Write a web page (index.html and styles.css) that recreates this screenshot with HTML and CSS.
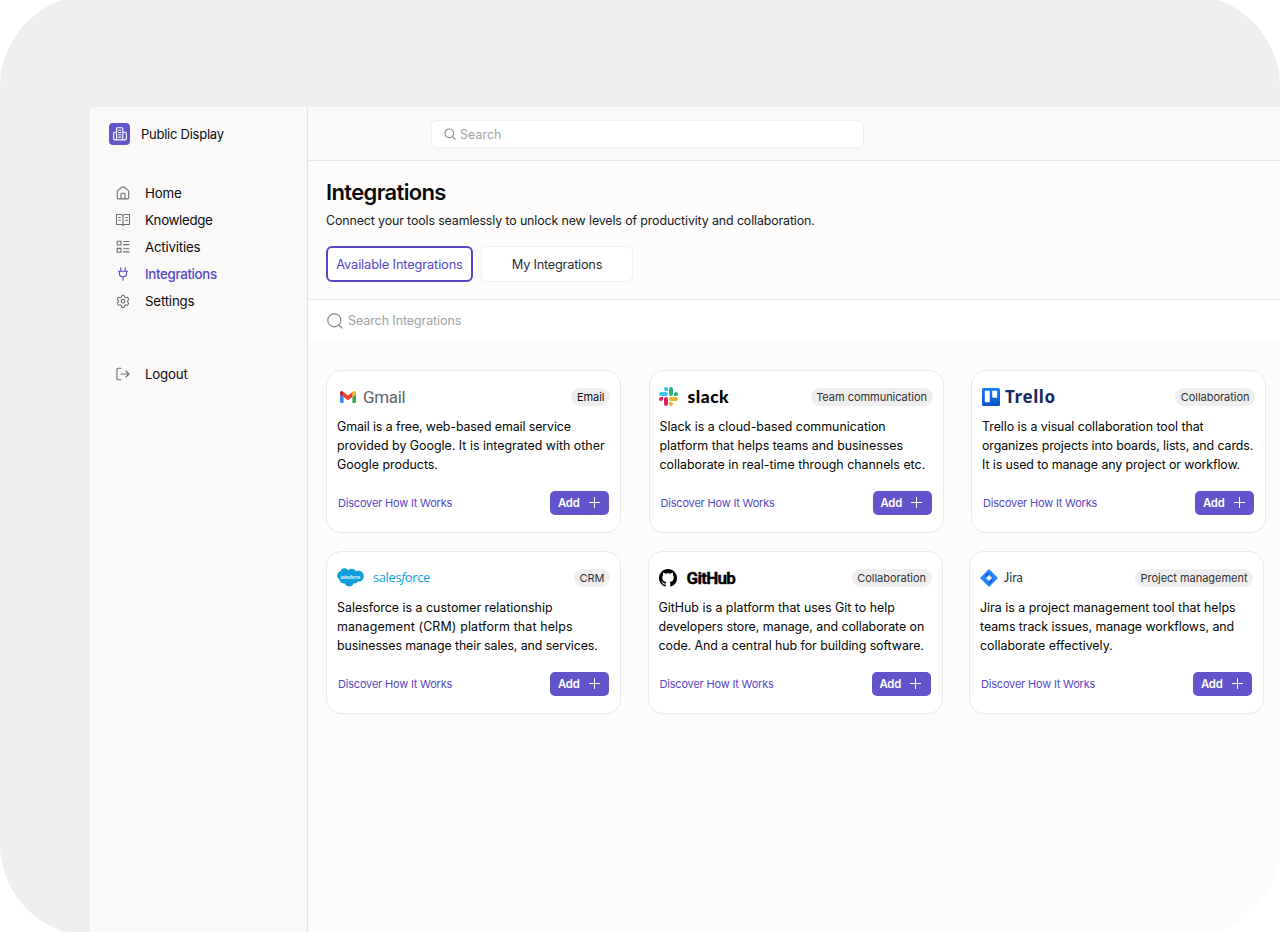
FILE: index.html
```html
<!DOCTYPE html>
<html lang="en">
<head>
<meta charset="utf-8">
<title>Integrations</title>
<link rel="stylesheet" href="styles.css">
</head>
<body>
<div class="shell">
<div class="app">
  <aside class="sidebar">
    <div class="org">
      <span class="org-logo"><svg width="16" height="16" viewBox="0 0 16 16" fill="none" stroke="#fff" stroke-width="1.1" stroke-linejoin="round" stroke-linecap="round"><path d="M4.600 13.800V2.600Q4.600 1.700 5.500 1.700H9.900Q10.800 1.700 10.800 2.600V13.800M4.600 6.300H2.500Q1.700 6.300 1.700 7.100V13.100Q1.700 13.900 2.500 13.900H13.500Q14.300 13.900 14.300 13.100V7.100Q14.300 6.300 13.500 6.300H10.800M6.600 4.200H8.900M6.600 6.500H8.900M6.600 8.800H8.900M6.600 11.100H8.900"/></svg></span>
      <span class="org-name">Public Display</span>
    </div>
    <nav class="nav">
      <a class="nav-item"><svg class="ni" viewBox="0 0 14 14"><path d="M1.3 5.6Q1.3 4.9 1.9 4.4L6.2 1Q7 .5 7.8 1L12.1 4.4Q12.7 4.9 12.7 5.6V11.7Q12.7 12.9 11.5 12.9H2.5Q1.3 12.9 1.3 11.7ZM5 12.8V8.3Q5 7.2 6 7.2H8Q9 7.2 9 8.3V12.8"/></svg><span>Home</span></a>
      <a class="nav-item"><svg class="ni" viewBox="0 0 14 14"><path d="M7 2.5Q6.2 1.5 4.8 1.5H.5V11.5H5Q6.3 11.5 7 12.5Q7.7 11.5 9 11.5H13.5V1.5H9.2Q7.8 1.5 7 2.5ZM7 2.5V12.5M2.6 4.5H4.4M2.6 7.3H4.4M9.6 4.5H11.4M9.6 7.3H11.4"/></svg><span class="tight">Knowledge</span></a>
      <a class="nav-item"><svg class="ni" viewBox="0 0 14 14"><path d="M1.2 1.2H5V5H1.2ZM1.2 8.4H5V12.3H1.2ZM7.6 1.5H13M7.6 4.6H13M7.6 8.8H13M7.6 11.9H13"/></svg><span>Activities</span></a>
      <a class="nav-item active"><svg class="ni" viewBox="0 0 14 14"><path d="M4.8 .8V4M9.2 .8V4M2.5 4.2H11.5M3.4 4.2V6.6Q3.4 9.9 7 9.9Q10.6 9.9 10.6 6.6V4.2M7 9.9V13.3"/></svg><span class="tight">Integrations</span></a>
      <a class="nav-item"><svg class="ni" viewBox="0 0 24 24"><g stroke-width="1.9"><path d="M9.6 3.9c.2-1.1.8-1.9 1.9-1.9h1c1.100 0 1.700.8 1.900 1.900l.2 1c.1.500.5.800.9 1l.500.300c.4.200.9.300 1.300.100l.9-.3c1-.4 2 0 2.500.9l.6 1.100c.5.900.3 2-.5 2.600l-.8.700c-.4.300-.5.700-.5 1.200s.1.900.5 1.200l.8.700c.8.600 1 1.700.5 2.600l-.6 1.100c-.5.900-1.500 1.300-2.500.9l-.9-.3c-.4-.2-.9-.1-1.300.1l-.5.300c-.4.200-.8.500-.9 1l-.2 1c-.2 1.100-.8 1.900-1.900 1.900h-1c-1.100 0-1.700-.8-1.900-1.900l-.2-1c-.1-.5-.5-.8-.9-1l-.5-.3c-.4-.2-.9-.3-1.300-.1l-.9.300c-1 .4-2 0-2.500-.9l-.6-1.100c-.5-.9-.3-2 .5-2.600l.8-.7c.4-.3.500-.7.500-1.200s-.1-.9-.5-1.200l-.8-.7c-.8-.6-1-1.700-.5-2.600l.6-1.100c.5-.9 1.500-1.300 2.500-.9l.9.300c.4.200.9.100 1.300-.1l.5-.3c.4-.2.800-.5.900-1z"/><circle cx="12" cy="12.300" r="3"/></g></svg><span>Settings</span></a>
      <a class="nav-item logout"><svg class="ni" viewBox="0 0 14 14"><path d="M5 1.200H2.200Q.9 1.200.9 2.500V11.500Q.9 12.800 2.200 12.800H5M5 7H13M10 4L13 7L10 10"/></svg><span>Logout</span></a>
    </nav>
  </aside>
  <main class="main">
    <header class="topbar">
      <div class="search"><svg width="12" height="12" viewBox="0 0 12 12" fill="none" stroke="#8f8f8f" stroke-width="1.200" stroke-linecap="round"><circle cx="5.300" cy="5.300" r="4.300"/><path d="M8.500 8.500L11 11"/></svg><span>Search</span></div>
    </header>
    <section class="head">
      <h1>Integrations</h1>
      <p class="sub">Connect your tools seamlessly to unlock new levels of productivity and collaboration.</p>
      <div class="tabs"><button class="tab on">Available Integrations</button><button class="tab">My Integrations</button></div>
    </section>
    <div class="filter"><svg width="16" height="16" viewBox="0 0 16 16" fill="none" stroke="#858585" stroke-width="1.150" stroke-linecap="round"><circle cx="7.300" cy="7.300" r="6.500"/><path d="M12 12L15 15"/></svg><span>Search Integrations</span></div>
    <div class="rows">
      <div class="row first">
        <article class="card">
          <div class="brand"><svg class="gm-i" width="16" height="12" viewBox="0 0 16 12"><path fill="#4285f4" d="M1.100 12H3.600V5.900L0 3.200V10.900Q0 12 1.100 12Z"/><path fill="#34a853" d="M12.400 12H14.900Q16 12 16 10.900V3.200L12.400 5.900Z"/><path fill="#fbbc04" d="M12.400 1.100V5.900L16 3.200V1.800C16 .1 14-.6 12.900.7Z"/><path fill="#ea4335" d="M3.600 5.900V1.100L8 4.400L12.400 1.100V5.900L8 9.200Z"/><path fill="#c5221f" d="M0 1.800V3.200L3.600 5.900V1.100L3.100.7C2-.6 0 .1 0 1.800Z"/></svg><span class="wm gmail">Gmail</span><span class="tag dark">Email</span></div>
          <p class="desc"><span class="n2">Gmail is a free, web-based email service</span><span>provided by Google. It is integrated with other</span><span>Google products.</span></p>
          <div class="foot"><a>Discover How It Works</a><button class="add">Add<i></i></button></div>
        </article>
        <article class="card">
          <div class="brand"><svg class="sl-i" width="19" height="19" viewBox="0 0 24 24"><path fill="#e01e5a" d="M5.042 15.165a2.528 2.528 0 0 1-2.520 2.523A2.528 2.528 0 0 1 0 15.165a2.527 2.527 0 0 1 2.522-2.520h2.520zM6.313 15.165a2.527 2.527 0 0 1 2.521-2.520 2.527 2.527 0 0 1 2.521 2.520v6.313A2.528 2.528 0 0 1 8.834 24a2.528 2.528 0 0 1-2.521-2.522z"/><path fill="#36c5f0" d="M8.834 5.042a2.528 2.528 0 0 1-2.521-2.520A2.528 2.528 0 0 1 8.834 0a2.528 2.528 0 0 1 2.521 2.522v2.520zM8.834 6.313a2.528 2.528 0 0 1 2.521 2.521 2.528 2.528 0 0 1-2.521 2.521H2.522A2.528 2.528 0 0 1 0 8.834a2.528 2.528 0 0 1 2.522-2.521z"/><path fill="#2eb67d" d="M18.956 8.834a2.528 2.528 0 0 1 2.522-2.521A2.528 2.528 0 0 1 24 8.834a2.528 2.528 0 0 1-2.522 2.521h-2.522zM17.688 8.834a2.528 2.528 0 0 1-2.523 2.521 2.527 2.527 0 0 1-2.520-2.521V2.522A2.527 2.527 0 0 1 15.165 0a2.528 2.528 0 0 1 2.523 2.522z"/><path fill="#ecb22e" d="M15.165 18.956a2.528 2.528 0 0 1 2.523 2.522A2.528 2.528 0 0 1 15.165 24a2.527 2.527 0 0 1-2.520-2.522v-2.522zM15.165 17.688a2.527 2.527 0 0 1-2.520-2.523 2.526 2.526 0 0 1 2.520-2.520h6.313A2.527 2.527 0 0 1 24 15.165a2.528 2.528 0 0 1-2.522 2.523z"/></svg><span class="wm slack">slack</span><span class="tag">Team communication</span></div>
          <p class="desc"><span>Slack is a cloud-based communication</span><span>platform that helps teams and businesses</span><span>collaborate in real-time through channels etc.</span></p>
          <div class="foot"><a>Discover How It Works</a><button class="add">Add<i></i></button></div>
        </article>
        <article class="card">
          <div class="brand"><svg class="tr-i" width="18" height="18" viewBox="0 0 18 18"><defs><linearGradient id="tg" x1="0" y1="0" x2="0" y2="1"><stop offset="0" stop-color="#1480f5"/><stop offset="1" stop-color="#0854c8"/></linearGradient></defs><rect width="18" height="18" rx="1.500" fill="url(#tg)"/><rect x="2.800" y="2.800" width="5" height="11.400" rx=".8" fill="#fff"/><rect x="10.200" y="2.800" width="5" height="7" rx=".8" fill="#fff"/></svg><span class="wm trello">Trello</span><span class="tag">Collaboration</span></div>
          <p class="desc"><span class="n1">Trello is a visual collaboration tool that</span><span class="n2">organizes projects into boards, lists, and cards.</span><span class="n2">It is used to manage any project or workflow.</span></p>
          <div class="foot"><a>Discover How It Works</a><button class="add">Add<i></i></button></div>
        </article>
      </div>
      <div class="row second">
        <article class="card">
          <div class="brand"><svg class="sf-i" width="27" height="19" viewBox="0 0 27 19"><path fill="#0d9dda" d="M11.200 2.300C12.100 1.300 13.400.7 14.800.7C16.700.7 18.300 1.700 19.200 3.300C20 2.900 20.800 2.800 21.600 2.800C24.600 2.800 26.700 5.200 26.700 8.200C26.700 11.600 23.900 14.100 20.700 13.500C20 14.800 18.500 15.700 16.800 15.200C16 17.200 14.200 18.500 12.100 18.500C10 18.500 8.200 17.200 7.500 15.300C4.500 15.800 2.500 13.800 2.500 11.500C1 10.700.2 9.300.2 7.600C.2 5.200 2 3.300 4 3C3.600 1.300 5.800.2 7.600.3C9.100.4 10.400 1.200 11.200 2.300Z"/><text x="3.400" y="10.800" font-family="Open Sans, sans-serif" font-size="4.400" font-weight="600" fill="#fff" textLength="20">salesforce</text></svg><span class="wm salesforce">sales<em>f</em>orce</span><span class="tag">CRM</span></div>
          <p class="desc"><span>Salesforce is a customer relationship</span><span class="p">management (CRM) platform that helps</span><span class="n2">businesses manage their sales, and services.</span></p>
          <div class="foot"><a>Discover How It Works</a><button class="add">Add<i></i></button></div>
        </article>
        <article class="card">
          <div class="brand"><svg class="gh-i" width="18" height="18" viewBox="0 0 16 16"><path d="M8 0C3.580 0 0 3.580 0 8c0 3.540 2.290 6.530 5.470 7.590.4.070.55-.17.55-.38 0-.19-.01-.82-.01-1.490-2.010.37-2.530-.49-2.690-.94-.09-.23-.48-.94-.82-1.130-.28-.15-.68-.52-.01-.53.630-.01 1.080.58 1.230.82.720 1.210 1.870.87 2.330.66.070-.52.280-.87.510-1.070-1.780-.2-3.640-.89-3.640-3.950 0-.87.310-1.590.82-2.150-.08-.2-.36-1.020.08-2.120 0 0 .67-.21 2.200.82.640-.18 1.320-.27 2-.27s1.360.09 2 .27c1.530-1.040 2.200-.82 2.200-.82.440 1.100.16 1.920.08 2.120.51.560.82 1.270.82 2.150 0 3.070-1.870 3.750-3.650 3.950.29.250.54.730.54 1.480 0 1.070-.01 1.930-.01 2.200 0 .21.150.46.550.38A8.010 8.010 0 0 0 16 8c0-4.420-3.580-8-8-8"/></svg><span class="wm github">GitHub</span><span class="tag">Collaboration</span></div>
          <p class="desc"><span>GitHub is a platform that uses Git to help</span><span class="n1">developers store, manage, and collaborate on</span><span class="n1">code. And a central hub for building software.</span></p>
          <div class="foot"><a>Discover How It Works</a><button class="add">Add<i></i></button></div>
        </article>
        <article class="card">
          <div class="brand"><svg class="ji-i" width="18" height="18" viewBox="0 0 18 18"><path fill="#2684ff" d="M9 0L17.500 8.500Q18 9 17.500 9.500L9 18L.5 9.500Q0 9 .5 8.500Z"/><path fill="#0e5fdc" d="M9 3V6.200L6.200 9L5.200 7.500Q5.200 5.500 9 3Z"/><path fill="#0e5fdc" d="M9 15V11.800L11.800 9L12.800 10.500Q12.800 12.500 9 15Z"/><path fill="#fff" d="M9 6L12 9L9 12L6 9Z"/></svg><span class="wm jira">Jira</span><span class="tag">Project management</span></div>
          <p class="desc"><span>Jira is a project management tool that helps</span><span class="n1">teams track issues, manage workflows, and</span><span>collaborate effectively.</span></p>
          <div class="foot"><a>Discover How It Works</a><button class="add">Add<i></i></button></div>
        </article>
      </div>
    </div>
  </main>
</div>
</div>
</body>
</html>
```
FILE: styles.css
```css
* { box-sizing: border-box; }
body { margin: 0; background: #fff; font-family: Inter, "Liberation Sans", sans-serif; height: 932px; overflow: hidden; color: #0b0b0d; }
.shell { margin-top: -5px; height: 941px; padding: 112px 0 0 90px; background: #eee; border-radius: 92px; overflow: hidden; }
.app { display: flex; height: 829px; background: #fdfcfa; border-top-left-radius: 4px; overflow: hidden; }
.sidebar { width: 218px; flex: none; background: #faf9f8; border-right: 1px solid #e2e2e2; padding: 16px 0 0 19px; }
.org { display: flex; align-items: center; height: 22px; gap: 11px; font-size: 13px; letter-spacing: -.25px; }
.org-logo { width: 21px; height: 22px; border-radius: 4px; background: #6254cb; display: flex; align-items: center; justify-content: center; }
.nav { display: flex; flex-direction: column; padding: 34px 0 0 7px; }
.nav-item { display: flex; align-items: center; gap: 15px; height: 27.200px; font-size: 13.300px; letter-spacing: -.2px; }
.tight { letter-spacing: -.33px; }
.ni { width: 14px; height: 14px; fill: none; stroke: #6b7078; stroke-width: 1.100; stroke-linecap: round; stroke-linejoin: round; }
.active { color: #5647c6; font-weight: 500; }
.active .ni { stroke: #5647c6; }
.logout { margin-top: 45.500px; }
.main { flex: 1; min-width: 0; }
.topbar { height: 54px; background: #faf9f8; border-bottom: 1px solid #e8e8e7; padding: 13px 0 0 123px; }
.search { width: 433px; height: 28px; border: 1px solid #f0efee; border-radius: 6px; background: #fff; display: flex; align-items: center; padding-left: 12px; gap: 4px; font-size: 12.500px; color: #a6a6a6; }
.head { height: 139px; border-bottom: 1px solid #e8e8e7; padding: 17px 0 0 18px; }
h1 { margin: 0; font-size: 22px; line-height: 29px; font-weight: 600; letter-spacing: -.64px; color: #0b0b0d; }
.sub { margin: 5px 0 0; font-size: 12.400px; line-height: 18px; color: #15201f; white-space: nowrap; letter-spacing: -.117px; }
.tabs { display: flex; gap: 8px; margin-top: 16px; }
.tab { height: 36px; width: 152px; border: 1px solid #f0efee; border-radius: 6px; background: #fff; font: 12.800px Inter, sans-serif; letter-spacing: -.25px; color: #2e2e32; padding: 0; white-space: nowrap; }
.tab.on { width: 147px; border: 2px solid #5647c6; color: #5647c6; letter-spacing: -.13px; }
.filter { height: 41px; background: #fff; display: flex; align-items: center; gap: 5px; padding-left: 19px; font-size: 12.500px; color: #a2a2a2; letter-spacing: -.09px; }
.rows { padding: 29px 0 0 18px; display: flex; flex-direction: column; gap: 18px; }
.row { display: flex; }
.first { gap: 27.500px; }
.second { gap: 26.500px; }
.card { width: 295px; height: 163px; flex: none; background: #fff; border: 1px solid #e9e9e8; border-radius: 15px; padding: 16px 10px 0 10px; box-shadow: 0 1px 1px rgba(0,0,0,.02); }
.brand { display: flex; align-items: center; height: 19px; white-space: nowrap; }
.brand svg { flex: none; }
.sl-i { margin-left: -1px; }
.tag { margin-left: auto; height: 18px; line-height: 18px; border-radius: 9px; background: #eeeeef; font-size: 11px; padding: 0 5.500px; color: #303034; letter-spacing: -.03px; }
.dark { color: #111; }
.gm-i { margin-left: 3px; margin-right: 7px; }
.gmail { font: 17px Roboto, sans-serif; color: #5f6368; letter-spacing: -.35px; }
.slack { font: 900 17.500px Lato, sans-serif; color: #000; margin-left: 10px; letter-spacing: .5px; }
.trello { font: 700 17px/18px "Noto Sans", sans-serif; color: #172b5f; margin-left: 5px; letter-spacing: .6px; }
.salesforce { font: 500 13px/16px "Open Sans", sans-serif; color: #0d9dda; margin-left: 9px; letter-spacing: -.4px; padding-bottom: 2px; }
.github { font: 700 17px Roboto, sans-serif; color: #000; margin-left: 10px; letter-spacing: -.7px; -webkit-text-stroke: .35px #000; }
.jira { font: 12.500px Lato, sans-serif; color: #253858; margin-left: 6px; }
.desc { margin: 11px 0 0; font-size: 12.400px; line-height: 19px; color: #050505; white-space: nowrap; }
.desc span { display: block; }
.desc .n1 { letter-spacing: -.05px; }
.desc .n2 { letter-spacing: -.1px; }
.desc .p { letter-spacing: .15px; }
.foot { display: flex; justify-content: space-between; align-items: center; margin: 16px 1px 0 1px; height: 25px; font-size: 11px; color: #5647c6; letter-spacing: -.19px; }
.add { width: 59px; height: 24px; border: 0; border-radius: 5px; background: #6254cb; color: #fff; font: 600 11.300px Inter, sans-serif; letter-spacing: -.2px; display: flex; align-items: center; gap: 9px; padding: 0 0 0 8px; }
.add i { width: 11px; height: 11px; background: linear-gradient(#fff, #fff) center / 11px 1px no-repeat, linear-gradient(#fff, #fff) center / 1px 11px no-repeat; }
```
